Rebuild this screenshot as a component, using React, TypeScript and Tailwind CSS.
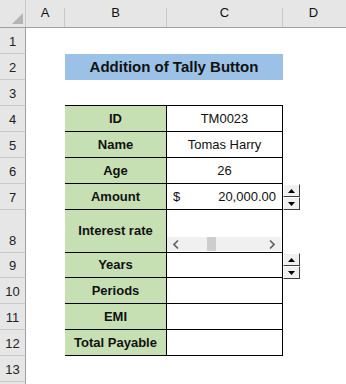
import React from "react";

const rowHeights = [26, 26, 26, 26, 26, 26, 26, 43, 25, 26, 26, 26, 26, 26];

function Spinner() {
  return (
    <div className="flex flex-col w-[17px]">
      <div className="h-[13px] bg-[#f0f0f0] border-t border-l border-t-white border-l-white border-r border-b border-r-[#404040] border-b-[#404040] flex items-center justify-center">
        <svg width="7" height="4" viewBox="0 0 7 4"><path d="M3.5 0 L7 4 L0 4 Z" fill="#000" /></svg>
      </div>
      <div className="h-[13px] bg-[#f0f0f0] border-t border-l border-t-white border-l-white border-r border-b border-r-[#404040] border-b-[#404040] flex items-center justify-center">
        <svg width="7" height="4" viewBox="0 0 7 4"><path d="M0 0 L7 0 L3.5 4 Z" fill="#000" /></svg>
      </div>
    </div>
  );
}

function ScrollBar() {
  return (
    <div className="h-[14px] w-[114px] bg-[#f0f0f0] flex items-center relative">
      <svg className="absolute left-[6px] top-[3px]" width="6" height="9" viewBox="0 0 6 9">
        <path d="M5 0.5 L1 4.5 L5 8.5" stroke="#606060" strokeWidth="1.6" fill="none" />
      </svg>
      <div className="absolute left-[40px] top-0 w-[9px] h-[14px] bg-[#cdcdcd]" />
      <svg className="absolute right-[6px] top-[3px]" width="6" height="9" viewBox="0 0 6 9">
        <path d="M1 0.5 L5 4.5 L1 8.5" stroke="#606060" strokeWidth="1.6" fill="none" />
      </svg>
    </div>
  );
}

const labels: Record<number, string> = {
  4: "ID",
  5: "Name",
  6: "Age",
  7: "Amount",
  8: "Interest rate",
  9: "Years",
  10: "Periods",
  11: "EMI",
  12: "Total Payable",
};

const values: Record<number, string> = {
  4: "TM0023",
  5: "Tomas Harry",
  6: "26",
};

export default function App() {
  return (
    <div
      className="relative w-[346px] h-[384px] bg-white overflow-hidden text-[13px] text-[#111]"
      style={{ fontFamily: '"Liberation Sans", Arial, sans-serif' }}
    >
      {/* column header */}
      <div className="flex h-[28px] bg-[#e6e6e6] border-b border-[#a0a0a0]">
        <div className="w-[26px] relative border-r border-[#c8c8c8]">
          <svg className="absolute left-[12px] top-[13px]" width="11" height="11" viewBox="0 0 11 11">
            <path d="M11 0 L11 11 L0 11 Z" fill="#b4b4b4" />
          </svg>
        </div>
        <div className="w-[39px] flex items-end justify-center pb-[5px] border-r border-[#c8c8c8] mt-[8px]">A</div>
        <div className="w-[102px] flex items-end justify-center pb-[5px] border-r border-[#c8c8c8] mt-[8px]">B</div>
        <div className="w-[116px] flex items-end justify-center pb-[5px] border-r border-[#c8c8c8] mt-[8px]">C</div>
        <div className="flex-1 flex items-end justify-center pb-[5px] mt-[8px] pr-[2px]">D</div>
      </div>
      {rowHeights.map((h, i) => {
        const r = i + 1;
        const inTable = r >= 4 && r <= 12;
        return (
          <div key={r} className="flex" style={{ height: h }}>
            <div className="w-[26px] bg-[#e6e6e6] border-r border-b border-r-[#a0a0a0] border-b-[#c8c8c8] flex items-end justify-center pb-[2px] text-[#222]">
              {r <= 13 ? r : ""}
            </div>
            <div className="w-[39px]" />
            {r === 2 ? (
              <div className="w-[218px] bg-[#9bc2e6] font-bold text-[15px] flex items-center justify-center pt-[1px]">
                Addition of Tally Button
              </div>
            ) : r === 3 ? (
              <div className="w-[218px] border-b border-black" />
            ) : inTable ? (
              <>
                <div className="w-[102px] bg-[#c6e0b4] border-r border-b border-black font-bold flex items-center justify-center">
                  {labels[r]}
                </div>
                <div className="w-[116px] border-r border-b border-black flex items-center justify-center relative">
                  {values[r]}
                  {r === 7 && (
                    <div className="flex w-full justify-between px-[6px]">
                      <span>$</span>
                      <span>20,000.00</span>
                    </div>
                  )}
                  {r === 8 && (
                    <div className="absolute left-0 bottom-[1px]">
                      <ScrollBar />
                    </div>
                  )}
                </div>
              </>
            ) : (
              <div className="w-[218px]" />
            )}
            <div className="flex-1 relative">
              {(r === 7 || r === 9) && (
                <div className="absolute left-0 top-[0px]">
                  <Spinner />
                </div>
              )}
            </div>
          </div>
        );
      })}
    </div>
  );
}
